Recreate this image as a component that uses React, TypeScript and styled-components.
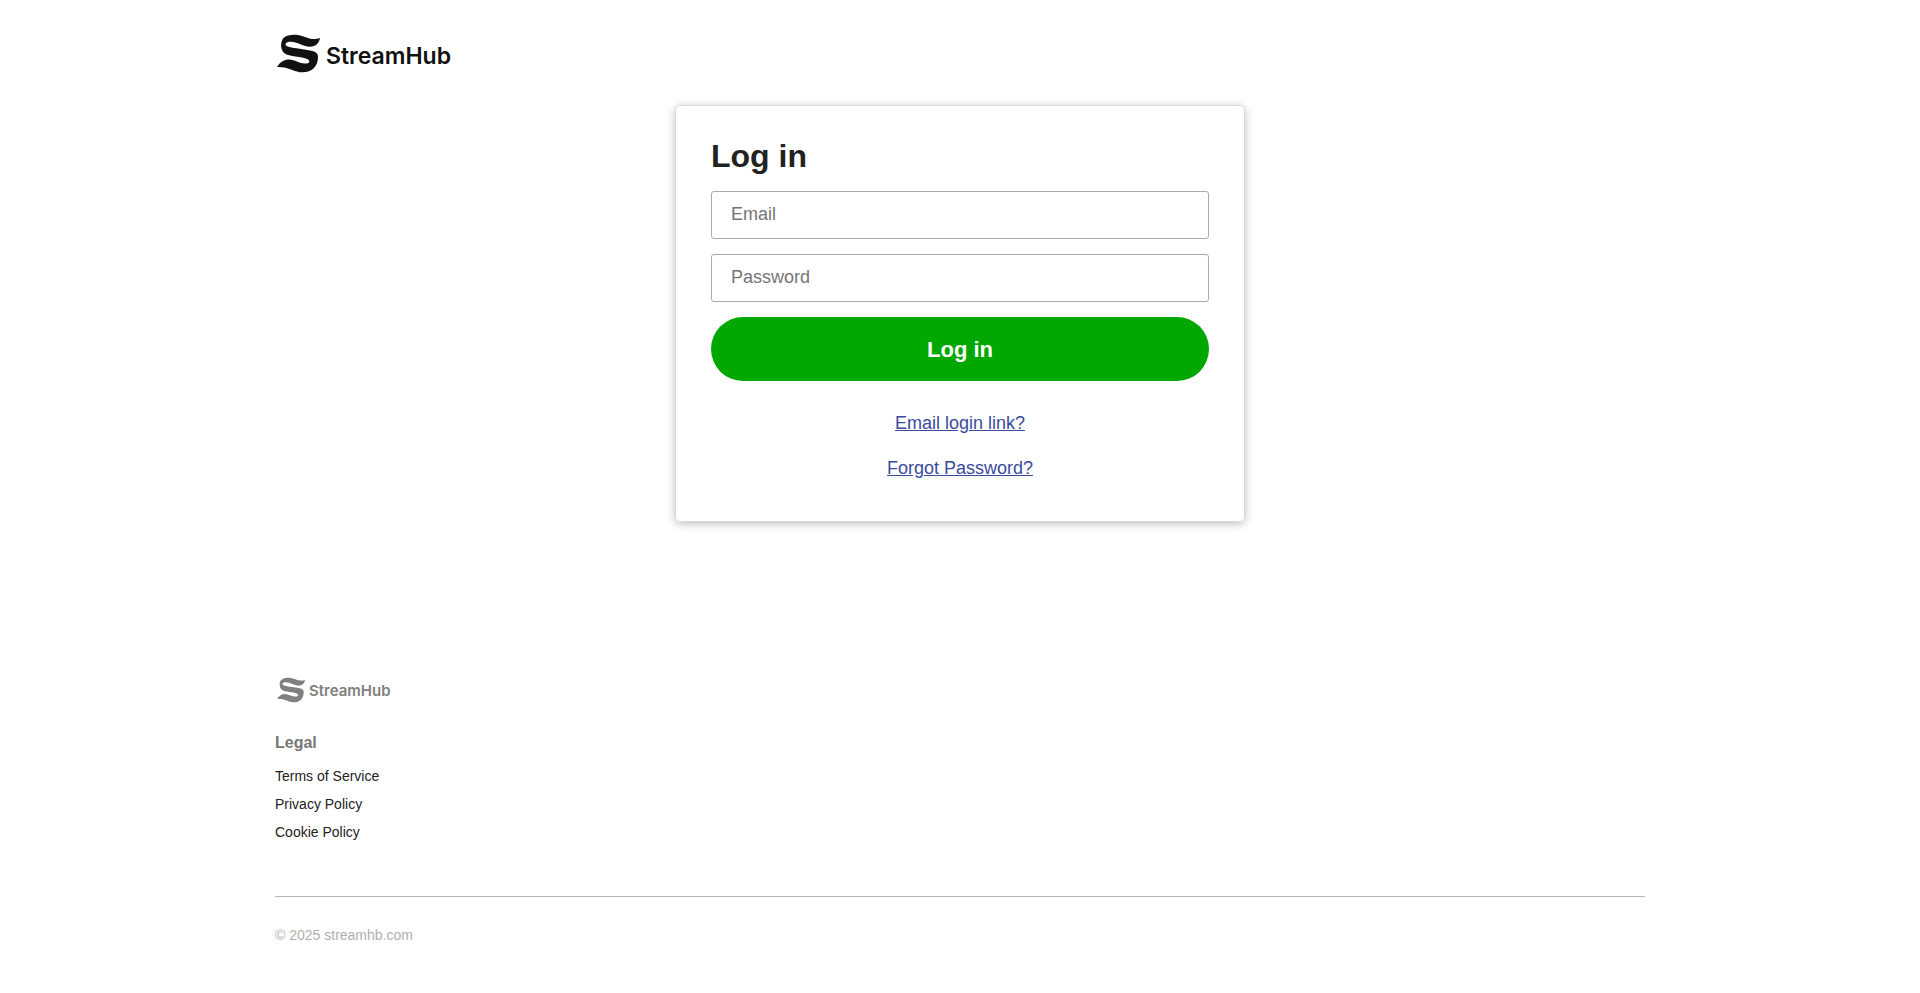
import React from "react";
import styled, { createGlobalStyle } from "styled-components";

const GlobalStyle = createGlobalStyle`
  *, *::before, *::after { box-sizing: border-box; }
  body {
    margin: 0;
    background: #fff;
    color: #222;
    font-family: "Liberation Sans", Arial, sans-serif;
  }
`;

const Container = styled.div`
  max-width: 1410px;
  margin: 0 auto;
  padding: 0 20px;
`;

const Header = styled.header`
  padding: 34px 0 32px;
`;

const Brand = styled.a<{ $small?: boolean }>`
  display: flex;
  align-items: center;
  width: fit-content;
  padding-left: 2px;
  gap: ${(p) => (p.$small ? 4 : 6)}px;
  color: ${(p) => (p.$small ? "#808080" : "#111")};
  font-family: Inter, "Liberation Sans", sans-serif;
  font-weight: 600;
  font-size: ${(p) => (p.$small ? 15 : 23)}px;
  line-height: ${(p) => (p.$small ? 20 : 30)}px;
  text-decoration: none;

  svg {
    width: ${(p) => (p.$small ? 28 : 43)}px;
    height: ${(p) => (p.$small ? 26 : 39)}px;
    fill: currentColor;
  }

  span {
    padding-top: ${(p) => (p.$small ? 2 : 4)}px;
  }
`;

const Card = styled.main`
  width: 100%;
  max-width: 570px;
  margin: 0 auto;
  padding: 30px 35px;
  border: 1px solid #d8d8d8;
  border-radius: 5px;
  box-shadow: 0 2px 10px rgba(0, 0, 0, 0.25);
`;

const Title = styled.h1`
  margin: 0 0 15px;
  font-size: 32px;
  line-height: 40px;
`;

const Form = styled.form`
  display: flex;
  flex-direction: column;
  gap: 15px;
`;

const Field = styled.input`
  width: 100%;
  height: 48px;
  padding: 0 19px 2px;
  border: 1px solid #aaa;
  border-radius: 3px;
  background: #fff;
  color: #222;
  font: inherit;
  font-size: 18px;

  &::placeholder { color: #757575; opacity: 1; }
`;

const Submit = styled.button`
  height: 64px;
  padding: 2px 20px 0;
  border: 0;
  border-radius: 32px;
  background: #00a800;
  color: #fff;
  font: inherit;
  font-size: 22px;
  font-weight: 700;
  cursor: pointer;
`;

const HelpLinks = styled.nav`
  display: flex;
  flex-direction: column;
  align-items: center;
  gap: 20px;
  padding: 30px 0 10px;
`;

const HelpLink = styled.a`
  color: #3b4a9e;
  font-size: 18px;
  line-height: 25px;
`;

const Footer = styled.footer`
  padding-top: 155px;
`;

const LegalTitle = styled.h2`
  margin: 30px 0 9px;
  color: #777;
  font-size: 16px;
  line-height: 20px;
`;

const LegalList = styled.ul`
  margin: 0;
  padding: 0 0 50px;
  list-style: none;
  font-size: 14px;
  line-height: 28px;
`;

const LegalLink = styled.a`
  color: #222;
  text-decoration: none;
`;

const Copyright = styled.p`
  margin: 0;
  padding: 28px 0;
  border-top: 1px solid #b5b5b5;
  color: #b0b0b0;
  font-size: 14px;
  line-height: 20px;
`;

function Logo({ small }: { small?: boolean }) {
  return (
    <Brand href="#" $small={small}>
      <svg viewBox="0 0 128 114" aria-hidden="true">
        <path d="M128 11C126 25 116 37 98 37C80 37 60 22 40 22C27 22 22 29 28 34C36 40 60 41 86 46C110 50 123 53 122 68C122 95 104 113 76 113C52 113 36 96 0 97C10 82 22 75 36 75C54 75 66 88 86 87C98 86 100 78 90 73C74 66 36 67 22 56C10 46 10 27 17 14C24 3 40 1 54 1C76 1 92 14 110 14C117 14 123 13 128 11Z" />
      </svg>
      <span>StreamHub</span>
    </Brand>
  );
}

const legalLinks = ["Terms of Service", "Privacy Policy", "Cookie Policy"];

export default function App() {
  return (
    <>
      <GlobalStyle />
      <Container>
        <Header>
          <Logo />
        </Header>
        <Card>
          <Title>Log in</Title>
          <Form onSubmit={(e) => e.preventDefault()}>
            <Field type="email" placeholder="Email" aria-label="Email" />
            <Field type="password" placeholder="Password" aria-label="Password" />
            <Submit type="submit">Log in</Submit>
          </Form>
          <HelpLinks>
            <HelpLink href="#">Email login link?</HelpLink>
            <HelpLink href="#">Forgot Password?</HelpLink>
          </HelpLinks>
        </Card>
        <Footer>
          <Logo small />
          <LegalTitle>Legal</LegalTitle>
          <LegalList>
            {legalLinks.map((label) => (
              <li key={label}>
                <LegalLink href="#">{label}</LegalLink>
              </li>
            ))}
          </LegalList>
          <Copyright>© 2025 streamhb.com</Copyright>
        </Footer>
      </Container>
    </>
  );
}
